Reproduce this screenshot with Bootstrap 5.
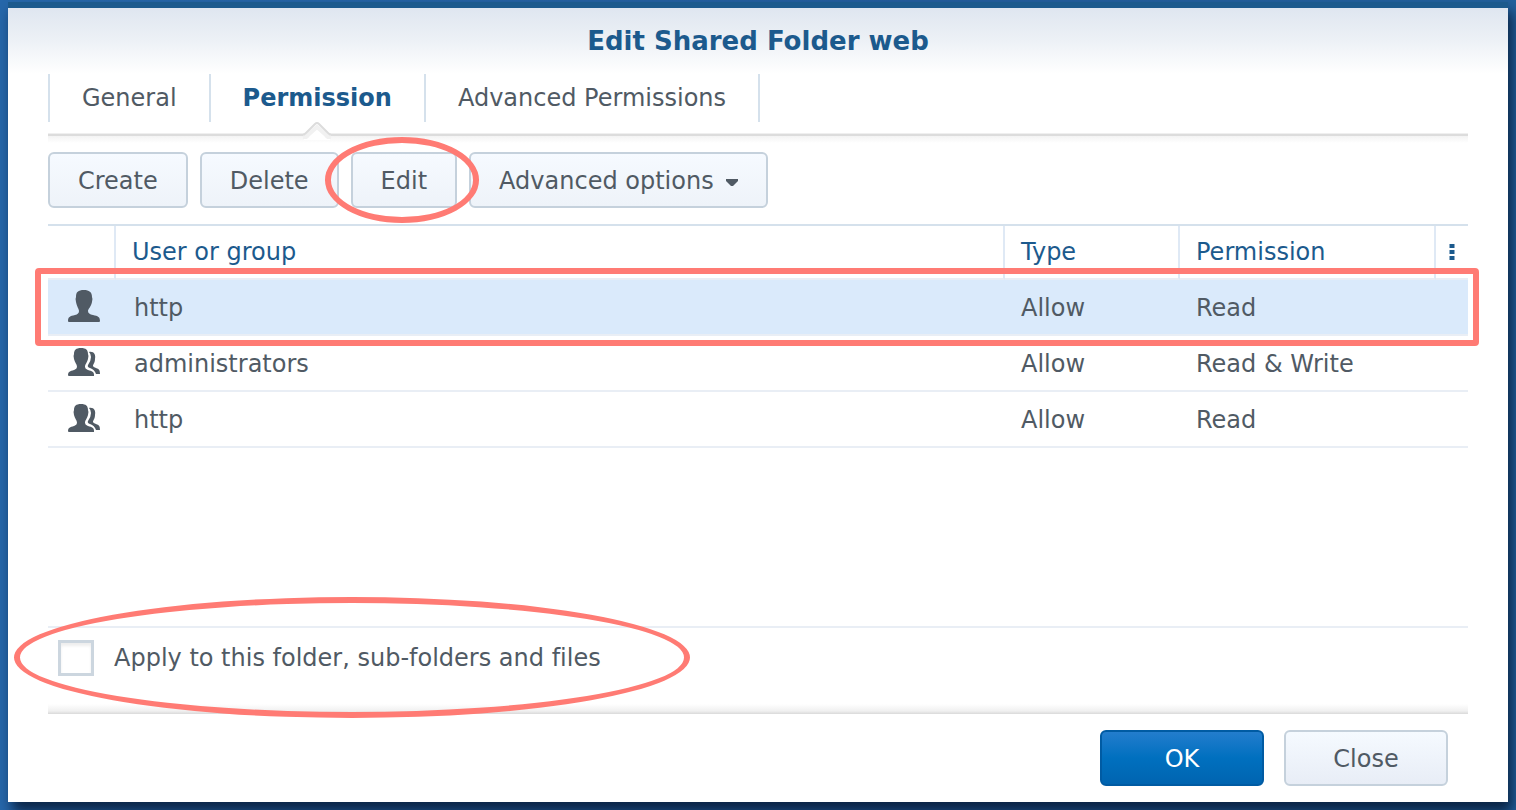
<!DOCTYPE html>
<html lang="en">
<head>
<meta charset="utf-8">
<meta name="viewport" content="width=device-width, initial-scale=1">
<title>Edit Shared Folder web</title>
<link rel="stylesheet" href="https://cdn.jsdelivr.net/npm/bootstrap@5.3.0/dist/css/bootstrap.min.css">
<style>
  :root { --ink: #505a64; --brand: #1c5a8d; --rule: #d5e1ec; --mark: #ff7b74; }
  body {
    font-family: Verdana, "DejaVu Sans", sans-serif; font-variant-ligatures: none;
    font-size: 24px; line-height: 32px; color: var(--ink);
    background: linear-gradient(90deg, #2667aa, #235c9c 60%, #22609c);
    padding: 2px 8px 8px;
  }
  .dialog { background: #fff; border-top: 6px solid var(--brand); box-shadow: 4px 10px 12px rgba(0,10,30,.7); }
  .dialog-head { background: linear-gradient(#dfe6f0, #edf1f6 50%, #fff); height: 66px; }
  .dialog-head h1 { font-size: 26px; line-height: 32px; color: var(--brand); }
  .dialog-body { padding: 0 40px; }
  .tabs { border-left: 2px solid var(--rule); }
  .tabs .nav-link {
    color: var(--ink); padding: 8px 32px; border-right: 2px solid var(--rule);
    line-height: 32px; position: relative;
  }
  .tabs .nav-link.active { color: var(--brand); font-weight: 700; }
  .pointer { position: absolute; left: 50%; top: 100%; margin-left: -14px; z-index: 1; }
  .tab-rule { height: 10px; margin-top: 11px; background: linear-gradient(#efefef 0 1px, #dcdcdc 1px 3px, #f3f3f3 3px, #fff); }
  .tools { gap: 12px; padding: 9px 0 16px; }
  .btn-tool {
    --bs-btn-font-size: 24px; --bs-btn-line-height: 32px; --bs-btn-color: var(--ink);
    --bs-btn-padding-x: 28px; --bs-btn-border-width: 2px; --bs-btn-border-radius: 6px;
    --bs-btn-border-color: #c5d1dc; --bs-btn-hover-color: var(--ink); --bs-btn-hover-border-color: #a9bccd;
    padding-top: 11px; padding-bottom: 9px;
    background: linear-gradient(#f6faff, #eef3f9);
  }
  .caret { margin: 2px 0 0 12px; }
  .btn-foot { width: 164px; background-image: linear-gradient(#f5faff, #e8edf6); }
  .btn-ok {
    --bs-btn-color: #fff; --bs-btn-hover-color: #fff;
    --bs-btn-border-color: #005ba3; --bs-btn-hover-border-color: #004b8a;
    background-image: linear-gradient(#237dcd, #0070bf 50%, #0064b0);
  }
  .grid { table-layout: fixed; width: 100%; border-collapse: separate; border-spacing: 0; border-top: 2px solid var(--rule); }
  .grid th { height: 54px; font-weight: 400; color: var(--brand); border-bottom: 2px solid #e9eef5; border-right: 2px solid #dfe9f5; padding: 0 16px; }
  .grid th:last-child { border-right: 0; padding: 0; }
  .grid td { height: 56px; border-bottom: 2px solid #e9eef5; padding: 2px 16px 0; }
  .grid td:nth-child(2) { padding-left: 18px; }
  .grid td:first-child { padding: 0 0 0 18px; }
  .grid tr.picked { position: relative; }
  .grid tr.picked td { background: #daeafb; }
  .grid svg { display: block; }
  .col-icon { width: 68px; } .col-type { width: 175px; } .col-perm { width: 256px; } .col-more { width: 32px; }
  .ring-row { position: absolute; inset: -12px -11px -10px -13px; border: 6px solid var(--mark); border-radius: 4px; pointer-events: none; z-index: 2; }
  .ring { position: absolute; border: 6px solid var(--mark); border-radius: 50%; pointer-events: none; z-index: 2; }
  .ring-edit { inset: -17px -24px -17px -28px; }
  .ring-check { inset: -31px auto -14px -34px; width: 676px; }
  .apply { border-top: 2px solid #e9eef5; padding: 12px 10px 28px; }
  .apply label { padding-left: 20px; }
  .form-check-input.tick { width: 36px; height: 36px; margin: 0; border: 3px solid #ccd6df; border-radius: 0; box-shadow: inset 0 3px 3px #eee; }
  .foot-rule { height: 10px; background: linear-gradient(#fff, #f0f0f0 70%, #d9d9d9); }
  .foot { gap: 20px; padding: 16px 20px; }
</style>
</head>
<body class="min-vh-100 d-flex">
<main class="dialog d-flex flex-column flex-fill">
  <header class="dialog-head d-flex justify-content-center align-items-center">
    <h1 class="fw-bold m-0">Edit Shared Folder web</h1>
  </header>
  <div class="dialog-body d-flex flex-column flex-fill">
    <nav class="nav tabs align-self-start">
      <a class="nav-link" href="#">General</a>
      <a class="nav-link active" href="#" aria-current="page">Permission
        <svg class="pointer" width="28" height="18" viewBox="0 0 28 18" aria-hidden="true">
          <path d="M1 18V12L14 1 27 12V18Z" fill="#fff"/>
          <path d="M0 15H2Q4 15 5 13L14 5L23 13Q24 15 26 15H28" fill="none" stroke="#f1f1f1" stroke-width="4"/>
          <path d="M0 12.5H1Q2 12 3 11L12 2Q14 0 16 2L25 11Q26 12 27 12.5H28" fill="none" stroke="#dcdcdc" stroke-width="2"/>
        </svg></a>
      <a class="nav-link" href="#">Advanced Permissions</a>
    </nav>
    <div class="tab-rule"></div>
    <div class="tools d-flex">
      <button type="button" class="btn btn-tool">Create</button>
      <button type="button" class="btn btn-tool">Delete</button>
      <button type="button" class="btn btn-tool position-relative">Edit<span class="ring ring-edit"></span></button>
      <button type="button" class="btn btn-tool d-flex align-items-center">Advanced options
        <svg class="caret" width="12" height="7" viewBox="0 0 12 7" aria-hidden="true"><path d="M0 0H12V2L7 7H5L0 2Z" fill="#505a64"/></svg></button>
    </div>
    <table class="grid">
      <colgroup><col class="col-icon"><col><col class="col-type"><col class="col-perm"><col class="col-more"></colgroup>
      <thead><tr>
        <th></th><th>User or group</th><th>Type</th><th>Permission</th>
        <th><svg width="32" height="18" viewBox="0 0 32 18" role="img" aria-label="Columns"><path d="M13.5 1h5v4h-5zM13.5 7h5v4h-5zM13.5 13h5v4h-5z" fill="#1c5a8d"/></svg></th>
      </tr></thead>
      <tbody>
        <tr class="picked">
          <td><svg width="34" height="34" viewBox="0 0 34 34" aria-hidden="true"><path d="M18 0C12 0 10 2 10 7Q9 9 10 12C11 17 13 19 13 21Q13 24 9 25C4 26 2 27 2 31Q2 32 3 32H33Q34 32 34 31C34 27 32 26 27 25Q22 24 22 21C22 19 25 17 26 12Q27 9 26 7C26 2 23 0 18 0Z" fill="#505a64"/></svg><span class="ring-row"></span></td>
          <td>http</td><td>Allow</td><td>Read</td><td></td>
        </tr>
        <tr>
          <td><svg width="36" height="30" viewBox="0 0 36 30" aria-hidden="true"><g id="group" fill="#505a64"><path d="M15 0C10 0 8 2 8 6Q7 8 8 11C9 15 11 16 11 19Q11 21 8 22C4 23 2 24 2 27Q2 28 3 28H28V27C28 24 26 23 22 22Q19 21 19 19C19 16 21 15 22 11Q23 8 22 6C22 2 20 0 15 0Z"/><path d="M23 4C28 3 30 7 29 11C29 15 27 16 27 18Q27 19 30 20C33 21 34 22 34 26H30C29 23 27 21 24 20Q21 19 22 17Q25 13 25 9Q25 6 23 4Z"/></g></svg></td>
          <td>administrators</td><td>Allow</td><td>Read &amp; Write</td><td></td>
        </tr>
        <tr>
          <td><svg width="36" height="30" viewBox="0 0 36 30" aria-hidden="true"><use href="#group"/></svg></td>
          <td>http</td><td>Allow</td><td>Read</td><td></td>
        </tr>
      </tbody>
    </table>
    <div class="mt-auto">
      <div class="apply position-relative d-flex align-items-center">
        <input class="form-check-input tick" type="checkbox" id="apply">
        <label for="apply">Apply to this folder, sub-folders and files</label>
        <span class="ring ring-check"></span>
      </div>
      <div class="foot-rule"></div>
    </div>
    <footer class="foot d-flex justify-content-end">
      <button type="button" class="btn btn-tool btn-foot btn-ok">OK</button>
      <button type="button" class="btn btn-tool btn-foot">Close</button>
    </footer>
  </div>
</main>
<script src="https://cdn.jsdelivr.net/npm/bootstrap@5.3.0/dist/js/bootstrap.bundle.min.js"></script>
</body>
</html>
